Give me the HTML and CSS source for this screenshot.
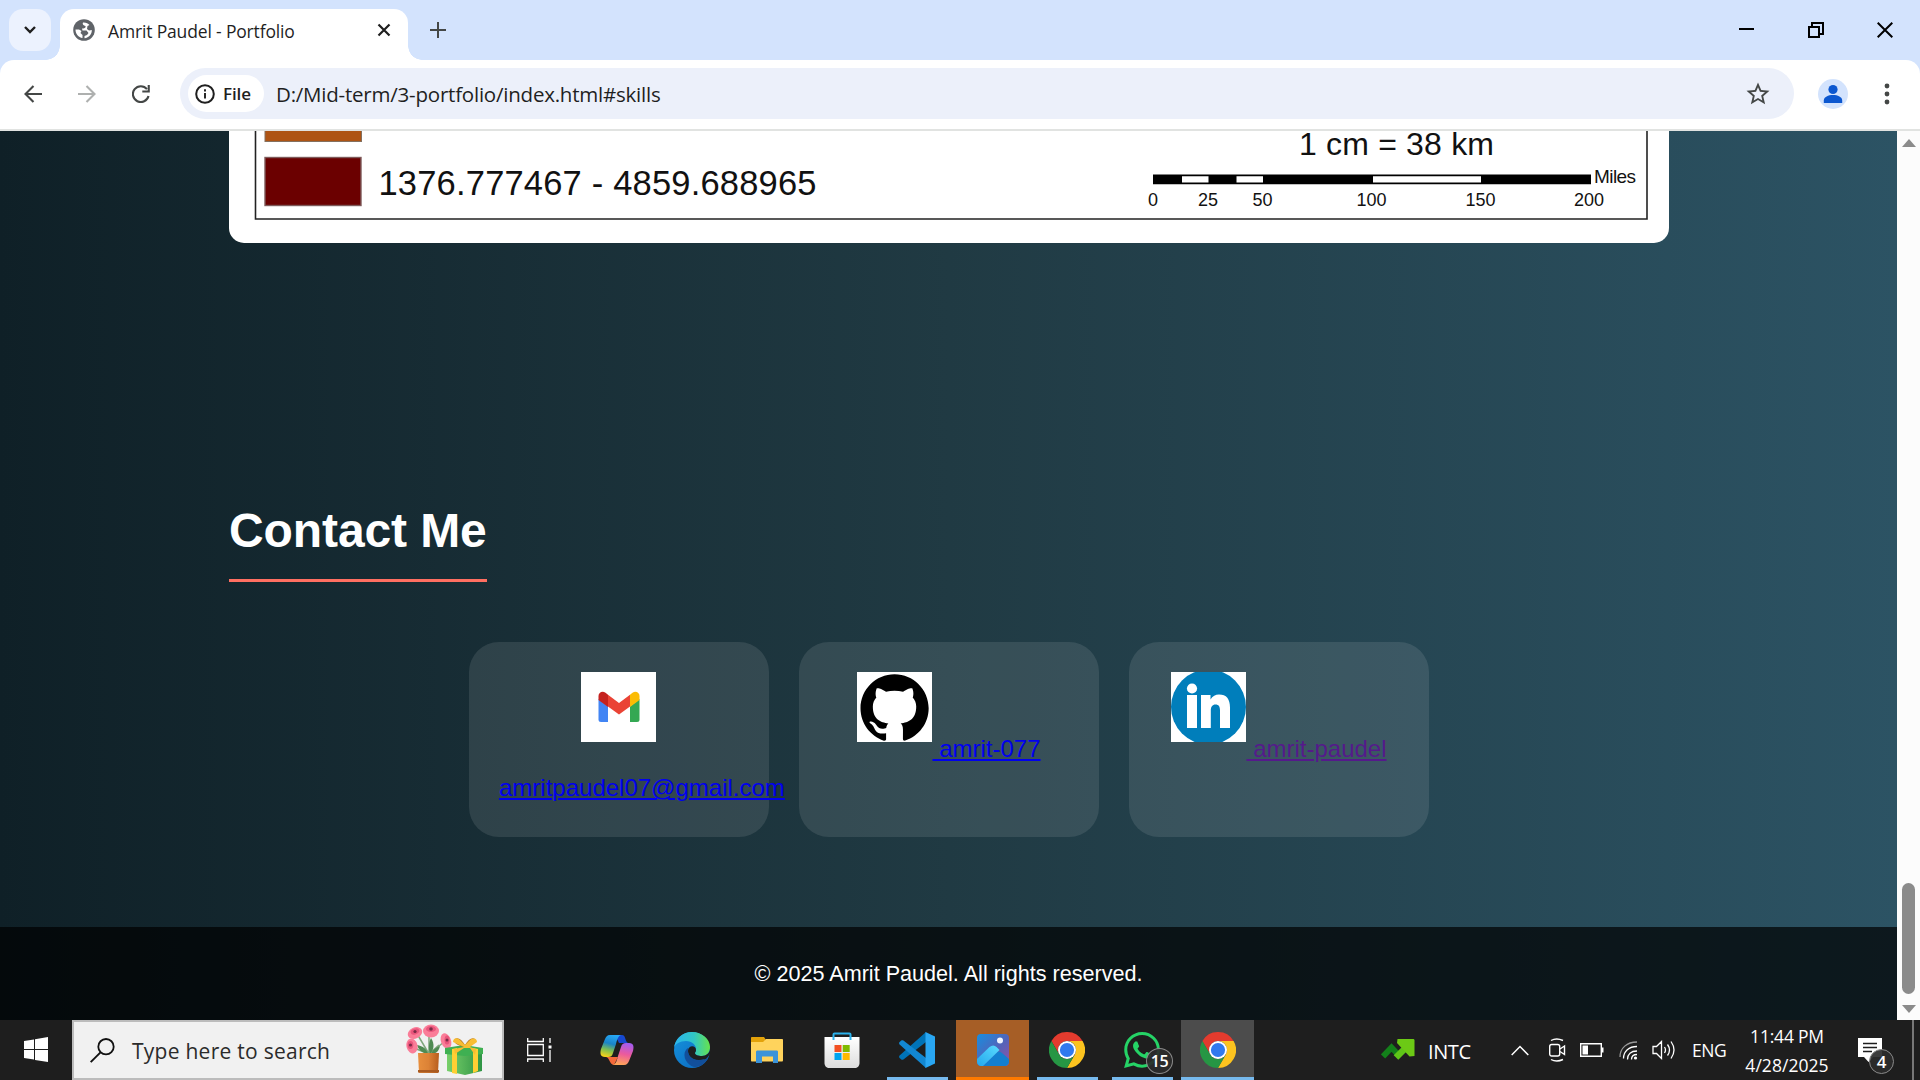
FILE: index.html
```html
<!DOCTYPE html>
<html lang="en">
<head>
<meta charset="utf-8">
<title>Amrit Paudel - Portfolio</title>
<link rel="stylesheet" href="styles.css">
</head>
<body>
<div class="screen">
  <header class="tabstrip">
    <div class="tab-search"><svg width="14" height="10" viewBox="0 0 14 10"><path d="M2 2l5 5 5-5" fill="none" stroke="#1f1f1f" stroke-width="2.4"/></svg></div>
    <div class="tab">
      <svg class="favicon" width="22" height="22" viewBox="0 0 22 22"><circle cx="11" cy="11" r="10.8" fill="#5f6368"/><path d="M10 3.500c-1 2 .5 3 2.500 3.500.5 2-1.500 2.500-3.500 2.500l.5 2h4l2 2.500-1.500 2-2.500 1v2.200c4.500-.4 7.500-4 7.300-8.200l-2.800.5-2-1.500.5-3 2-1c-1.500-1.700-3.500-2.700-6.500-2.500z" fill="#fff"/><path d="M2.500 10.500c0 4.500 3 8 7 8.500v-3l-2-2 1-2-2.500-1.500z" fill="#fff"/></svg>
      <span class="tab-title">Amrit Paudel - Portfolio</span>
      <svg class="tab-close" width="14" height="14" viewBox="0 0 14 14"><path d="M1.500 1.500l11 11m0-11l-11 11" stroke="#1f1f1f" stroke-width="2.200"/></svg>
    </div>
    <svg class="new-tab" width="16" height="16" viewBox="0 0 16 16"><path d="M8 0v16M0 8h16" stroke="#444746" stroke-width="2"/></svg>
    <div class="window-buttons">
      <svg width="16" height="16" viewBox="0 0 16 16"><path d="M0 7h15" stroke="#000" stroke-width="2"/></svg>
      <svg width="16" height="16" viewBox="0 0 16 16"><path d="M1 5h10v10H1zM4 4.500V1h11v11h-3.500" fill="none" stroke="#000" stroke-width="2"/></svg>
      <svg width="16" height="16" viewBox="0 0 16 16"><path d="M.7.700l14.600 14.600m0-14.600L.7 15.300" stroke="#000" stroke-width="2"/></svg>
    </div>
  </header>

  <div class="toolbar">
    <div class="nav">
      <svg width="18" height="18" viewBox="0 0 18 18"><path d="M18 9H1.500M9.500 1L1.500 9l8 8" fill="none" stroke="#444746" stroke-width="2.100"/></svg>
      <svg width="18" height="18" viewBox="0 0 18 18"><path d="M0 9h16.500M8.500 1l8 8-8 8" fill="none" stroke="#aeb0af" stroke-width="2.100"/></svg>
      <svg width="18" height="18" viewBox="0 0 18 18"><path d="M16.500 11A7.900 7.900 0 1 1 15 4.200" fill="none" stroke="#444746" stroke-width="2.100"/><path d="M17.800 0v7.500h-7.500V5.400h5.400V0z" fill="#444746"/></svg>
    </div>
    <div class="omnibox">
      <div class="chip">
        <svg width="20" height="20" viewBox="0 0 20 20"><circle cx="10" cy="10" r="8.800" fill="none" stroke="#1f1f1f" stroke-width="2"/><path d="M10 9v5.500M10 5.300v2.200" stroke="#1f1f1f" stroke-width="1.900"/></svg>
        <span class="chip-label">File</span>
      </div>
      <span class="url">D:/Mid-term/3-portfolio/index.html#skills</span>
      <svg class="star" width="24" height="24" viewBox="0 0 24 24"><path d="M22 9.240l-7.190-.62L12 2 9.190 8.630 2 9.240l5.460 4.730L5.820 21 12 17.270 18.180 21l-1.630-7.030L22 9.240zM12 15.400l-3.760 2.270 1-4.280-3.320-2.880 4.380-.38L12 6.100l1.710 4.040 4.380.38-3.320 2.880 1 4.280L12 15.400z" fill="#444746" transform="translate(-1.800 -1.800) scale(1.150)"/></svg>
    </div>
    <svg class="avatar" width="30" height="30" viewBox="0 0 30 30"><circle cx="15" cy="15" r="15" fill="#d3e3fd"/><circle cx="15" cy="10.500" r="4.600" fill="#0b57d0"/><path d="M5.800 24v-2.500c0-3.600 4.500-5.500 9.200-5.500s9.200 1.900 9.200 5.500V24z" fill="#0b57d0"/></svg>
    <svg class="menu" width="6" height="22" viewBox="0 0 6 22"><g fill="#444746"><circle cx="3" cy="3" r="2.400"/><circle cx="3" cy="11" r="2.400"/><circle cx="3" cy="19" r="2.400"/></g></svg>
  </div>

  <div class="viewport">
    <main class="page">
      <figure class="map-card">
        <svg width="1440" height="112" viewBox="229 131 1440 112">
          <path d="M255.500 131v88h1391.500v-88" fill="none" stroke="#222" stroke-width="1.600"/>
          <rect x="265" y="120" width="96.500" height="21.500" fill="#ae5414" stroke="#84705f"/>
          <rect x="265" y="157.500" width="96" height="48" fill="#6b0000" stroke="#7e5a5a" stroke-width="1.400"/>
          <g class="map-text">
            <text x="378.500" y="195" font-size="34.500" textLength="438">1376.777467 - 4859.688965</text>
            <text x="1299" y="154.500" font-size="32" textLength="195">1 cm = 38 km</text>
            <text x="1594" y="183" font-size="19" textLength="42">Miles</text>
          </g>
          <path d="M1153 174.500h438v9.700h-438z"/>
          <path d="M1182 176.200h26.500v6.400H1182zM1236.500 176.200h26.500v6.400h-26.500zM1373 176.200h108v6.400h-108z" fill="#fff"/>
          <g class="map-text" font-size="18" text-anchor="middle">
            <text x="1153" y="206">0</text><text x="1208" y="206">25</text><text x="1262.500" y="206">50</text><text x="1371.500" y="206">100</text><text x="1480.500" y="206">150</text><text x="1589" y="206">200</text>
          </g>
        </svg>
      </figure>

      <section class="contact">
        <h2>Contact Me</h2>
        <div class="cards">
          <div class="card card-mail">
            <svg class="logo" width="75" height="70" viewBox="0 0 75 70"><path fill="#fff" d="M0 0h75v70H0z"/><path d="M17.500 27l9.500 7.500V50h-7a2.500 2.500 0 0 1-2.500-2.500z" fill="#4285f4"/><path d="M58.500 27L49 34.500V50h7a2.500 2.500 0 0 0 2.500-2.500z" fill="#34a853"/><path d="M49 22.700l2.500-2c3-2.200 7-.5 7 3.300v4L49 35z" fill="#fbbc04"/><path d="M27 22.700l-2.500-2c-3-2.200-7-.5-7 3.300v4L27 35z" fill="#c5221f"/><path d="M27 22.700L38 31l11-8.300V34.500L38 42.500l-11-8z" fill="#ea4335"/></svg>
            <a href="#mail">amritpaudel07@gmail.com</a>
          </div>
          <div class="card">
            <a href="#github"><svg class="logo" width="75" height="70" viewBox="0 0 75 70"><path fill="#fff" d="M0 0h75v70H0z"/><path transform="translate(3.500 1.400) scale(2.840)" d="M12 .297c-6.630 0-12 5.373-12 12 0 5.303 3.438 9.800 8.205 11.385.6.113.82-.258.82-.577 0-.285-.01-1.040-.015-2.040-3.338.724-4.042-1.610-4.042-1.610C4.422 18.070 3.633 17.700 3.633 17.700c-1.087-.744.084-.729.084-.729 1.205.084 1.838 1.236 1.838 1.236 1.070 1.835 2.809 1.305 3.495.998.108-.776.417-1.305.76-1.605-2.665-.3-5.466-1.332-5.466-5.930 0-1.310.465-2.380 1.235-3.220-.135-.303-.54-1.523.105-3.176 0 0 1.005-.322 3.300 1.230.96-.267 1.980-.399 3-.405 1.020.006 2.040.138 3 .405 2.280-1.552 3.285-1.230 3.285-1.230.645 1.653.24 2.873.12 3.176.765.84 1.230 1.910 1.230 3.220 0 4.610-2.805 5.625-5.475 5.920.42.36.81 1.096.81 2.220 0 1.606-.015 2.896-.015 3.286 0 .315.21.69.825.57C20.565 22.092 24 17.592 24 12.297c0-6.627-5.373-12-12-12"/></svg> amrit-077</a>
          </div>
          <div class="card">
            <a class="visited" href="#linkedin"><svg class="logo" width="75" height="70" viewBox="0 0 75 70"><path fill="#fff" d="M0 0h75v70H0z"/><circle cx="37.500" cy="35" r="37.500" fill="#007ebb"/><g fill="#fff"><circle cx="21" cy="16.500" r="5.100"/><path d="M16 23h10v33H16zM30 23h9.500v4.500c2-3.500 5-5 8.500-5 7.500 0 11 4.500 11 13V56H49V38.500c0-4-1.300-6-4.500-6S39.800 35 39.800 38.500V56H30z"/></g></svg> amrit-paudel</a>
          </div>
        </div>
      </section>

      <footer class="footer">© 2025 Amrit Paudel. All rights reserved.</footer>
    </main>
    <div class="scrollbar">
      <i class="arrow-up"></i>
      <i class="thumb"></i>
      <i class="arrow-down"></i>
    </div>
  </div>

  <div class="taskbar">
    <div class="start"><svg width="24" height="26" viewBox="0 0 24 26"><path d="M0 4l10-1.600V12H0zM11 2.200L24 0v12H11zM0 13h10v9.600L0 21zM11 13h13v12l-13-2z" fill="#fff"/></svg></div>
    <div class="search">
      <svg width="25" height="25" viewBox="0 0 25 25"><circle cx="16" cy="8.700" r="7.700" fill="none" stroke="#111" stroke-width="1.800"/><path d="M10.500 14.300L.7 24.200" stroke="#111" stroke-width="1.900"/></svg>
      <span class="search-text">Type here to search</span>
      <svg class="gift-art" width="78" height="52" viewBox="0 0 78 52">
        <defs>
          <linearGradient id="pot"><stop stop-color="#e88f3d"/><stop offset=".5" stop-color="#dc8236"/><stop offset="1" stop-color="#b75d1c"/></linearGradient>
          <linearGradient id="box"><stop stop-color="#78d06a"/><stop offset="1" stop-color="#2f9445"/></linearGradient>
        </defs>
        <path d="M23 30L10 8m13 22V9m0 21L38 18M23 30L8 24m15 6l10-9" stroke="#7fa77c" stroke-width="1.500" fill="none"/>
        <path d="M22 30c-6-1-10-5-11-9 6 1 10 4 11 9zM24 30c-2-6-1-12 1-16 4 6 3 12-1 16zM25 30c2-5 6-7 9-8-1 5-4 8-9 8z" fill="#4f8a52"/>
        <g fill="#fa7d98"><ellipse cx="9" cy="9" rx="7.500" ry="5.500" transform="rotate(-25 9 9)"/><ellipse cx="25" cy="7" rx="8" ry="6.500"/><ellipse cx="6" cy="22" rx="5.500" ry="7.500" transform="rotate(-15 6 22)"/><ellipse cx="40" cy="17" rx="5" ry="8" transform="rotate(-20 40 17)"/></g>
        <g fill="#e9567c"><ellipse cx="9" cy="7.500" rx="4.500" ry="2.800" transform="rotate(-20 9 7.500)"/><ellipse cx="25" cy="5" rx="5" ry="3"/><ellipse cx="4.500" cy="21" rx="2.800" ry="4"/><ellipse cx="41" cy="16" rx="2.500" ry="4.500"/></g>
        <g fill="#7b2b46"><circle cx="9" cy="7.500" r="1.600"/><circle cx="25" cy="5" r="1.800"/><circle cx="4.500" cy="21" r="1.600"/><circle cx="41" cy="16" r="1.500"/></g>
        <path d="M12 29h21l-1 20H13z" fill="url(#pot)"/><path d="M12 46h21v2.500H12z" fill="#a95a20"/>
        <path d="M41 27l18 3 17-3v20l-17 4-18-4z" fill="url(#box)"/><path d="M39 24l19-3 19 3v6l-18 2-20-2z" fill="#3fb052"/>
        <path d="M46 25l5-1v26l-5-1zM67 24l5 1v22l-5 2z" fill="#ffcf33"/>
        <path d="M58 23c-8-2-11-5-9-8 3-2 7 1 10 6 3-5 7-8 10-6 2 3-2 6-9 8z" fill="#b47425"/>
        <path d="M58 23l-11-5c0-4 4-5 7-2l5 5 5-5c4-3 7-1 7 2l-7 5 6 2-1 6-5-7h-6l-9 6-1-5z" fill="#f7bd32"/>
      </svg>
    </div>
    <div class="app task-view"><svg width="26" height="26" viewBox="0 0 26 26" fill="none" stroke="#fff" stroke-width="1.300"><path d="M.7 1v3.500h15.600V1M.7 7.500h15.600v11H.7zM.7 25v-3h15.600v3M23 1v5m0 7v12"/><path d="M21.500 8.500h3v3h-3z" fill="#fff" stroke="none"/></svg></div>
    <div class="app"><svg width="34" height="32" viewBox="0 0 34 32">
      <defs>
        <linearGradient id="cpA" x1=".6" y1="0" x2=".35" y2="1"><stop stop-color="#27a8f6"/><stop offset=".4" stop-color="#1a84c7"/><stop offset=".7" stop-color="#7fbf50"/><stop offset="1" stop-color="#f4d21b"/></linearGradient>
        <linearGradient id="cpB" x1=".6" y1="0" x2=".4" y2="1"><stop stop-color="#a35bf0"/><stop offset=".5" stop-color="#ec5a9c"/><stop offset="1" stop-color="#ffa657"/></linearGradient>
      </defs>
      <path d="M15 1h7c4 0 3 7 6 8h-9z" fill="#1648cf"/><path d="M6 23h12l-4 8c-5-1-4-7-8-8z" fill="#f4693a"/>
      <path d="M10 1h11c-3 1-4 5-5 9l-3 9c-1 3-2 4-5 4H5c-5 0-5-4-4-8l4-10c1-2 2-4 5-4z" fill="url(#cpA)"/>
      <path d="M24 31H13c3-1 4-5 5-9l3-9c1-3 2-4 5-4h3c5 0 5 4 4 8l-4 10c-1 2-2 4-5 4z" fill="url(#cpB)"/>
    </svg></div>
    <div class="app"><svg width="36" height="36" viewBox="0 0 36 36">
      <defs>
        <linearGradient id="edA"><stop stop-color="#2ab4ee"/><stop offset=".55" stop-color="#31c6c5"/><stop offset="1" stop-color="#66e34c"/></linearGradient>
        <linearGradient id="edB" x2="1" y2="1"><stop stop-color="#1694dd"/><stop offset="1" stop-color="#0a65bd"/></linearGradient>
      </defs>
      <circle cx="18" cy="18" r="18" fill="url(#edB)"/>
      <path d="M0 16C1 7 8 0 18 0c10 0 18 7 18 15 0 6-4 9-8 9-4 0-7-1-7-3 0-1 1-1 1-4 0-4-4-8-10-8C6 9 1 12 0 16z" fill="url(#edA)"/>
      <path d="M14 16c-5 3-5 12 2 17 5 4 12 2 17-5 1-1 0-2-1-1-9 4-18-1-18-8z" fill="#124f9b"/>
      <path d="M22 18c0-5-8-5-8 1 0 5 5 10 12 9 4 0 6-1 7-2l3-4v-5c0 4-4 7-8 7s-7-1-7-3c0-1 1-1 1-3z" fill="#1e1e1e"/><path d="M14 19c0 6 6 11 17 8-3 3-9 4-13 1-4-2-5-6-4-9z" fill="#124f9b"/>
    </svg></div>
    <div class="app"><svg width="32" height="28" viewBox="0 0 32 28"><path d="M0 2c0-1 .5-1 1-1h12l2 3-2 3H0z" fill="#e3a20a"/><path d="M0 6h12l3-3h16c.7 0 1 .5 1 1v20c0 1-.5 1.500-1 1.500H1c-.7 0-1-.5-1-1.500z" fill="#ffd35c"/><path d="M5 27V16c0-1 .7-1.500 1.500-1.500h19c1 0 1.500.5 1.500 1.500v11h-5v-6.500H11V27z" fill="#3b93d9"/></svg></div>
    <div class="app"><svg width="36" height="36" viewBox="0 0 36 36"><defs><linearGradient id="st" x2="0" y2="1"><stop stop-color="#fff"/><stop offset="1" stop-color="#ddd"/></linearGradient></defs><path d="M.5 5h35v26c0 3-2 5-5 5h-25c-3 0-5-2-5-5z" fill="url(#st)"/><path d="M9.500 8V2.500c0-.7.300-1 1-1h15c.7 0 1 .3 1 1V8" fill="none" stroke="#2bb2ec" stroke-width="2"/><path d="M10.500 13h7v7h-7z" fill="#f25022"/><path d="M18.700 13h7v7h-7z" fill="#7fba00"/><path d="M10.500 21h7v7h-7z" fill="#00a4ef"/><path d="M18.700 21h7v7h-7z" fill="#ffb900"/></svg></div>
    <div class="app running"><svg width="36" height="36" viewBox="0 0 36 36"><path d="M.6 23.500c-.7.700-.7 1.700 0 2.400l1.700 1.500c.6.600 1.400.6 2.100.1L27 10V0z" fill="#0073b7"/><path d="M.6 12.500c-.7-.7-.7-1.700 0-2.400l1.700-1.500c.6-.6 1.400-.6 2.100-.1L27 26v10z" fill="#1287d2"/><path d="M26.500 0L36 4.500v27L26.500 36z" fill="#29a7f3"/></svg></div>
    <div class="app running alert"><svg width="32" height="32" viewBox="0 0 32 32"><defs><linearGradient id="ph" x2="1" y2="1"><stop stop-color="#168ee0"/><stop offset=".55" stop-color="#5463b8"/><stop offset="1" stop-color="#9551a8"/></linearGradient><linearGradient id="mt" x1="0" y1="1" x2="1" y2="0"><stop stop-color="#25a7ec"/><stop offset="1" stop-color="#59dbff"/></linearGradient></defs><rect width="32" height="32" rx="4" fill="url(#ph)"/><path d="M6 32l13-13c2-2 4-2 6 0l7 6v3c0 2-2 4-4 4z" fill="#147fd0"/><path d="M0 25l12.500-12c2.500-2 5-2 7 0l3 3L6 32H4c-2 0-4-2-4-4z" fill="url(#mt)"/><circle cx="23" cy="6.500" r="3" fill="#eef3ff"/></svg></div>
    <div class="app running"><svg width="36" height="36" viewBox="0 0 36 36"><path d="M2.410 9A18 18 0 0 1 33.590 9H18a9 9 0 0 0-7.790 13.500z" fill="#e33b2e"/><path d="M33.590 9A18 18 0 0 1 18 36l7.800-13.500A9 9 0 0 0 18 9z" fill="#fcc31f"/><path d="M18 36A18 18 0 0 1 2.410 9l7.800 13.500a9 9 0 0 0 15.590 0z" fill="#269644"/><circle cx="18" cy="18" r="9" fill="#fff"/><circle cx="18" cy="18" r="7.100" fill="#3079ee"/></svg></div>
    <div class="app running"><svg width="36" height="36" viewBox="0 0 24 24"><path fill="#25d366" d="M17.472 14.382c-.297-.149-1.758-.867-2.030-.967-.273-.099-.471-.148-.67.15-.197.297-.767.966-.94 1.164-.173.199-.347.223-.644.075-.297-.15-1.255-.463-2.390-1.475-.883-.788-1.480-1.761-1.653-2.059-.173-.297-.018-.458.13-.606.134-.133.298-.347.446-.52.149-.174.198-.298.298-.497.099-.198.05-.371-.025-.52-.075-.149-.669-1.612-.916-2.207-.242-.579-.487-.5-.669-.51-.173-.008-.371-.01-.57-.01-.198 0-.52.074-.792.372-.272.297-1.040 1.016-1.040 2.479 0 1.462 1.065 2.875 1.213 3.074.149.198 2.096 3.200 5.077 4.487.709.306 1.262.489 1.694.625.712.227 1.360.195 1.871.118.571-.085 1.758-.719 2.006-1.413.248-.694.248-1.289.173-1.413-.074-.124-.272-.198-.57-.347m-5.421 7.403h-.004a9.870 9.870 0 01-5.031-1.378l-.361-.214-3.741.982.998-3.648-.235-.374a9.860 9.860 0 01-1.510-5.260c.001-5.450 4.436-9.884 9.888-9.884 2.640 0 5.122 1.030 6.988 2.898a9.825 9.825 0 012.893 6.994c-.003 5.450-4.437 9.884-9.885 9.884m8.413-18.297A11.815 11.815 0 0012.050 0C5.495 0 .16 5.335.157 11.892c0 2.096.547 4.142 1.588 5.945L.057 24l6.305-1.654a11.882 11.882 0 005.683 1.448h.005c6.554 0 11.890-5.335 11.893-11.893a11.821 11.821 0 00-3.480-8.413z"/></svg><span class="badge badge-app">15</span></div>
    <div class="app running active"><svg width="36" height="36" viewBox="0 0 36 36"><path d="M2.410 9A18 18 0 0 1 33.590 9H18a9 9 0 0 0-7.790 13.500z" fill="#e33b2e"/><path d="M33.590 9A18 18 0 0 1 18 36l7.800-13.500A9 9 0 0 0 18 9z" fill="#fcc31f"/><path d="M18 36A18 18 0 0 1 2.410 9l7.800 13.500a9 9 0 0 0 15.590 0z" fill="#269644"/><circle cx="18" cy="18" r="9" fill="#fff"/><circle cx="18" cy="18" r="7.100" fill="#3079ee"/></svg></div>

    <div class="tray">
      <div class="stock"><svg width="34" height="22" viewBox="0 0 34 22"><path d="M2 17.500l8.500-9 8 8.500" fill="none" stroke="#13801a" stroke-width="6"/><path d="M15 18.500L28 5.500" stroke="#5fc518" stroke-width="6.500"/><path d="M16.500 0H32c1 0 1.500.5 1.500 1.500V17l-5 .5L16 4z" fill="#6cc915"/></svg><span class="stock-label">INTC</span></div>
      <svg class="chevron" width="18" height="11" viewBox="0 0 18 11"><path d="M.7 10L9 1.500l8.300 8.500" fill="none" stroke="#fff" stroke-width="1.500"/></svg>
      <svg class="cam" width="18" height="24" viewBox="0 0 18 24" fill="none" stroke="#fff" stroke-width="1.400"><rect x="1.700" y="6.500" width="10" height="11.500" rx="2"/><path d="M12 11l4.500-3v8.500L12 13.500M3 2.500q5.500-3 12 0M3 21.500q5.500 3 12 0"/></svg>
      <svg class="battery" width="24" height="14" viewBox="0 0 24 14"><path d="M.7.700h20.600v12.600H.7z" fill="none" stroke="#fff" stroke-width="1.400"/><path d="M22 4.500h1.500v5H22zM2.500 2.500H8v9H2.500z" fill="#fff"/></svg>
      <svg class="wifi" width="19" height="19" viewBox="0 0 19 19" fill="none" stroke="#fff" stroke-width="1.300"><path d="M1 16C1 7 8 1 18 1" stroke="#999"/><path d="M4.500 17.500C4.500 10 10 5.500 18 5.500M8.500 18.500C8.500 13 12 10 18 10M12.500 18.500c0-3 2-5 5.500-5"/><circle cx="16.500" cy="17" r="1.600" fill="#fff" stroke="none"/></svg>
      <svg class="volume" width="24" height="20" viewBox="0 0 24 20" fill="none" stroke="#fff" stroke-width="1.300"><path d="M1 6.500h3.500L9.500 1.500v17l-5-5H1zM12.500 7q2 3 0 6M15.500 4.500q4 5.500 0 11M19 1.500q6 8.500 0 17"/></svg>
      <span class="lang">ENG</span>
      <div class="clock"><span class="time">11:44 PM</span><span class="date">4/28/2025</span></div>
      <div class="notify"><svg width="24" height="24" viewBox="0 0 24 24"><path d="M0 0h24v19h-9l-4.500 5L6 19H0z" fill="#fff"/><path d="M5 5.500h14M5 9.500h14M5 13.500h9" stroke="#1e1e1e" stroke-width="1.300"/></svg><span class="badge badge-notify">4</span></div>
      <i class="show-desktop"></i>
    </div>
  </div>
</div>
</body>
</html>
```
FILE: styles.css
```css
* { box-sizing: border-box; }
body { margin: 0; overflow: hidden; }
svg { display: block; flex: none; }

.screen {
  display: flex;
  flex-direction: column;
  width: 1920px;
  height: 1080px;
  font-family: "Open Sans", "Noto Sans", sans-serif;
  color: #1f1f1f;
  background: #d3e3fd;
}

/* Tab strip */
.tabstrip { display: flex; align-items: flex-end; height: 60px; }
.tab-search {
  display: flex; align-items: center; justify-content: center;
  width: 42px; height: 42px; margin: 0 9px 9px;
  border-radius: 14px; background: #ecf2fe;
}
.tab {
  position: relative;
  display: flex; align-items: center;
  width: 348px; height: 51px; padding: 0 17px 9px 13px;
  border-radius: 14px 14px 0 0; background: #fff;
}
.tab::before, .tab::after {
  content: ""; position: absolute; bottom: 0; width: 14px; height: 14px;
}
.tab::before { left: -14px; background: radial-gradient(circle at 0 0, transparent 13.5px, #fff 14px); }
.tab::after { right: -14px; background: radial-gradient(circle at 100% 0, transparent 13.5px, #fff 14px); }
.tab-title { flex: 1; margin-left: 13px; padding-top: 1px; font-size: 17.5px; line-height: 24px; letter-spacing: -0.16px; white-space: nowrap; }
.new-tab { margin: 0 0 22px 22px; }
.window-buttons { display: flex; gap: 53px; margin: 0 27px 22px auto; }

/* Toolbar */
.toolbar {
  display: flex; align-items: center;
  height: 71px; padding: 0 30px 2px 24px;
  border-bottom: 2px solid #e1e3e1;
  border-radius: 14px 14px 0 0; background: #fff;
}
.nav { display: flex; gap: 36px; width: 156px; }
.omnibox {
  display: flex; align-items: center;
  width: 1614px; height: 51px; padding: 0 24px 0 8px;
  border-radius: 26px; background: #ecf0fa;
}
.chip {
  display: flex; align-items: center; gap: 8px;
  width: 76px; height: 37px; padding-left: 7px;
  border-radius: 19px; background: #fff;
}
.chip-label { font-size: 17px; font-weight: 600; letter-spacing: -0.1px; line-height: 24px; }
.url { flex: 1; margin-left: 12px; font-size: 20.5px; line-height: 28px; letter-spacing: -0.22px; }
.avatar { margin-left: 24px; }
.menu { margin-left: auto; }

/* Web page */
.viewport { display: flex; height: 889px; overflow: hidden; }
.page {
  display: flex; flex-direction: column;
  width: 1897px;
  font-family: "Liberation Sans", Arial, sans-serif;
  background: linear-gradient(to right, #0f2027, #203a43, #2c5364);
}
.map-card { width: 1440px; height: 112px; margin: 0 auto 0 229px; overflow: hidden; border-radius: 0 0 15px 15px; background: #fff; }
.map-text { font-family: "Liberation Sans", Arial, sans-serif; fill: #111; }
.contact { width: 1440px; height: 684px; margin-left: 229px; padding-top: 249px; }
.contact h2 {
  width: 258px; height: 90px; margin: 0 0 60px; padding-top: 11px;
  border-bottom: 3px solid #ff6f61;
  color: #fff; font-size: 48px; line-height: 55px; letter-spacing: -0.1px; white-space: nowrap;
}
.cards { display: flex; justify-content: center; gap: 30px; }
.card {
  width: 300px; height: 195px; padding: 30px;
  border-radius: 30px; background: rgba(255, 255, 255, 0.1);
  font-size: 24px; line-height: 38.4px; text-align: center;
}
.card-mail { padding-right: 31px; line-height: 39.4px; }
.card a { color: #00e; text-decoration: underline; }
.card a.visited { color: #551a8b; }
.logo { display: inline-block; margin-bottom: 15px; vertical-align: baseline; }
.footer {
  height: 93px; background: rgba(0, 0, 0, 0.7);
  color: #fff; font-size: 21.6px; line-height: 93px; letter-spacing: 0; text-align: center;
}

.scrollbar {
  display: flex; flex-direction: column; align-items: center;
  width: 23px; padding: 8px 0 7px; background: #fcfcfc;
}
.arrow-up, .arrow-down { border: solid transparent; border-width: 0 7.5px; }
.arrow-up { border-bottom: 8px solid #8b8b8b; }
.arrow-down { margin-top: 11px; border-top: 8px solid #8b8b8b; }
.thumb { width: 13px; height: 111px; margin-top: auto; border-radius: 7px; background: #8b8b8b; }

/* Taskbar */
.taskbar { display: flex; height: 60px; color: #fff; background: #1e1e1e; }
.start { display: flex; align-items: center; justify-content: center; width: 72px; }
.search {
  display: flex; align-items: center;
  width: 432px; padding: 0 18px 0 16px;
  border: 2px solid #bcbcbc; background: #f1f1f1; color: #2b2b2b;
}
.search-text { flex: 1; margin-left: 17px; padding-top: 2px; font-size: 21px; line-height: 28px; letter-spacing: 0.26px; white-space: nowrap; }
.app {
  position: relative;
  display: flex; align-items: center; justify-content: center;
  width: 75px; height: 60px;
}
.task-view { padding-right: 3px; }
.running::after {
  content: ""; position: absolute; left: 8px; bottom: 0;
  width: 61px; height: 3px; background: #76b9ed;
}
.alert, .active { width: 73px; margin-left: 2px; }
.alert { background: #a65e26; }
.active { background: #4c4c4c; }
.alert::after { left: 0; width: 73px; background: #ff7a00; }
.active::after { left: 0; width: 73px; }
.badge {
  position: absolute;
  display: flex; align-items: center; justify-content: center;
  border: 1.5px solid #8a8a8a; border-radius: 50%;
  background: rgba(43, 43, 43, 0.92); font-weight: 600; line-height: 1;
}
.badge-app { left: 42px; top: 28px; width: 27px; height: 26px; font-size: 16px; letter-spacing: -0.5px; }
.badge-notify { left: 11px; top: 11px; width: 25px; height: 25px; font-size: 17px; }

.tray { display: flex; align-items: center; flex: 1; padding-left: 127px; }
.stock { display: flex; align-items: center; gap: 13px; width: 130px; }
.stock-label { padding-top: 2px; font-size: 20px; letter-spacing: -0.4px; }
.cam { margin-left: 19px; }
.battery { margin-left: 14px; }
.wifi { margin-left: 15px; }
.volume { margin-left: 14px; }
.lang { width: 34px; margin-left: 16px; font-size: 17.5px; letter-spacing: -0.4px; }
.clock { display: flex; flex-direction: column; width: 100px; margin-left: 11px; padding-top: 1px; font-size: 17.5px; line-height: 28.5px; letter-spacing: -0.2px; text-align: center; white-space: nowrap; }
.date { letter-spacing: 0.05px; }
.notify { position: relative; margin-left: 21px; }
.show-desktop { width: 2px; height: 60px; margin-left: auto; margin-right: 6px; background: #777; }
```
